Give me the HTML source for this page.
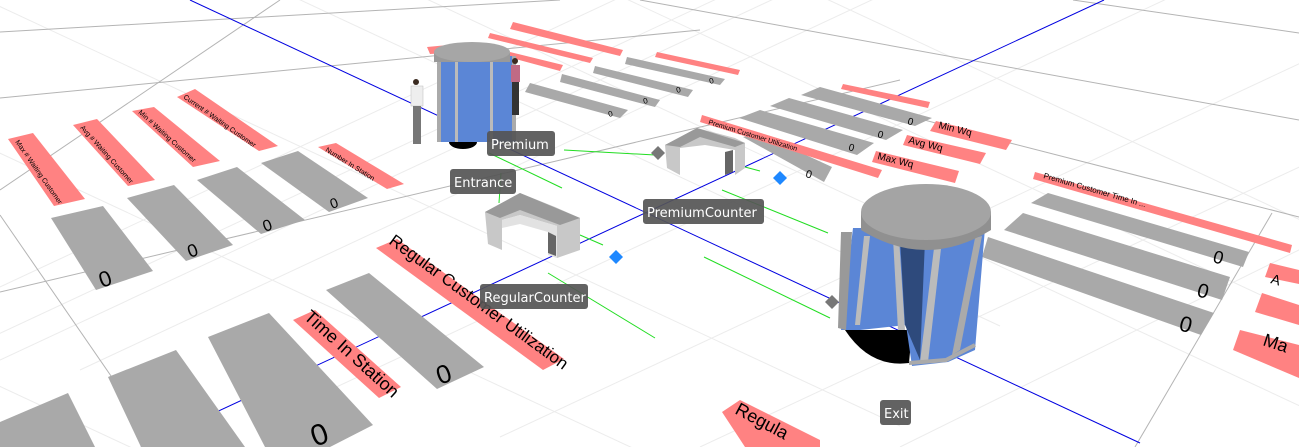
<!DOCTYPE html>
<html><head><meta charset="utf-8"><style>
html,body{margin:0;padding:0;background:#fff;overflow:hidden;width:1299px;height:447px}
svg{display:block;overflow:hidden}
.t{font-family:"Liberation Sans",sans-serif}
.lb{fill:#555;opacity:.92}
.lt{fill:#fff;font-family:"DejaVu Sans","Liberation Sans",sans-serif;font-size:13px}
</style></head><body>
<svg width="1299" height="447" viewBox="0 0 1299 447" xmlns="http://www.w3.org/2000/svg">
<rect width="1299" height="447" fill="#fff"/>
<g stroke="#ececec" stroke-width="1">
<line x1="-200" y1="60" x2="800" y2="526"/><line x1="-100" y1="-40" x2="900" y2="426"/>
<line x1="0" y1="-140" x2="1000" y2="326"/><line x1="300" y1="-60" x2="1300" y2="406"/>
<line x1="500" y1="-60" x2="1400" y2="360"/><line x1="700" y1="-60" x2="1500" y2="313"/>
<line x1="-400" y1="200" x2="600" y2="666"/><line x1="-500" y1="320" x2="500" y2="786"/>
<line x1="900" y1="-60" x2="0" y2="360"/><line x1="1000" y1="-60" x2="80" y2="370"/>
<line x1="1250" y1="-40" x2="300" y2="404"/><line x1="1350" y1="40" x2="500" y2="437"/>
<line x1="1400" y1="120" x2="700" y2="447"/><line x1="800" y1="-40" x2="-100" y2="380"/>
<line x1="700" y1="-40" x2="-150" y2="357"/><line x1="1400" y1="200" x2="900" y2="447"/>
</g>
<g stroke="#b4b4b4" stroke-width="1" fill="none">
<line x1="0" y1="32" x2="560" y2="0"/><line x1="0" y1="98" x2="700" y2="30"/>
<line x1="0" y1="292" x2="900" y2="80"/><line x1="0" y1="190" x2="280" y2="0"/>
<line x1="1010" y1="143" x2="1299" y2="217"/><line x1="1073" y1="0" x2="1299" y2="33"/>
<line x1="1272" y1="213" x2="1135" y2="447"/><line x1="850" y1="100" x2="1010" y2="143"/>
<line x1="0" y1="215" x2="160" y2="447"/><line x1="640" y1="0" x2="1299" y2="120"/>
</g>
<g stroke="#0000e0" stroke-width="1">
<line x1="190" y1="0" x2="1140" y2="443"/><line x1="1104" y1="0" x2="141" y2="447"/>
</g>
<g stroke="#22dd22" stroke-width="1">
<line x1="564" y1="150" x2="655" y2="155"/><line x1="489" y1="153" x2="562" y2="188"/>
<line x1="548" y1="273" x2="655" y2="338"/><line x1="580" y1="235" x2="603" y2="245"/>
<line x1="722" y1="190" x2="828" y2="233"/><line x1="704" y1="257" x2="830" y2="318"/>
<line x1="745" y1="167" x2="760" y2="171"/><line x1="501" y1="173" x2="499" y2="203"/>
</g>
<g fill="#a9a9a9">
<polygon points="51,218 103,206 153,271 96,290"/>
<polygon points="127,198 174,185 233,245 186,261"/>
<polygon points="197,180 237,167 305,220 261,234"/>
<polygon points="261,163 298,151 368,198 329,212"/>
<polygon points="0,422 68,393 95,447 0,447"/>
<polygon points="108,377 176,350 245,447 141,447"/>
<polygon points="208,337 269,313 373,425 330,447 265,447"/>
<polygon points="326,290 369,273 484,367 437,389"/>
<polygon points="530,83 628,110 620,118 525,92"/>
<polygon points="562,74 660,100 655,107 560,82"/>
<polygon points="595,66 693,90 688,97 593,73"/>
<polygon points="627,57 725,79 720,85 625,64"/>
<polygon points="801,95 820,87 932,118 915,126"/>
<polygon points="770,106 789,98 903,130 886,140"/>
<polygon points="739,118 760,110 874,143 857,155"/>
<polygon points="743,137 758,133 832,167 824,182"/>
<polygon points="1048,193 1249,252 1243,267 1031,203"/>
<polygon points="1023,213 1230,277 1222,300 1004,230"/>
<polygon points="988,237 1214,313 1201,335 982,257"/>
</g>
<g fill="#ff8282">
<polygon points="8,139 33,133 85,199 54,206"/>
<polygon points="73,125 97,119 155,180 128,186"/>
<polygon points="132,111 154,107 220,161 193,167"/>
<polygon points="177,97 195,89 278,146 259,151"/>
<polygon points="318,147 336,143 404,184 387,189"/>
<polygon points="293,320 315,310 401,387 379,398"/>
<polygon points="376,248 397,239 564,359 543,370"/>
<polygon points="513,22 623,50 620,56 510,29"/>
<polygon points="490,33 593,58 590,63 488,38"/>
<polygon points="510,52 563,65 560,71 508,57"/>
<polygon points="427,47 448,45 448,53 430,54"/>
<polygon points="657,52 740,70 738,75 655,57"/>
<polygon points="843,84 930,102 928,108 841,89"/>
<polygon points="702,115 882,170 878,178 700,122"/>
<polygon points="936,121 1012,140 1006,150 930,131"/>
<polygon points="907,135 986,153 980,164 903,145"/>
<polygon points="876,151 959,171 955,183 872,162"/>
<polygon points="1035,172 1292,245 1290,253 1033,179"/>
<polygon points="1270,263 1299,270 1299,284 1265,277"/>
<polygon points="1262,293 1299,305 1299,325 1255,312"/>
<polygon points="1240,330 1299,345 1299,378 1233,350"/>
<polygon points="722,412 740,400 820,440 820,447 745,447"/>
</g>
<g class="t" fill="#000">
<text transform="translate(303,318) rotate(42)" font-size="18">Time In Station</text>
<text transform="translate(388,243) rotate(36)" font-size="17">Regular Customer Utilization</text>
<text transform="translate(734,413) rotate(28)" font-size="18">Regula</text>
<text transform="translate(1043,178) rotate(16)" font-size="8">Premium Customer Time In ...</text>
<text transform="translate(938,128) rotate(14)" font-size="10">Min Wq</text>
<text transform="translate(908,143) rotate(14)" font-size="10">Avg Wq</text>
<text transform="translate(877,159) rotate(14)" font-size="10">Max Wq</text>
<text transform="translate(1270,283) rotate(16)" font-size="14">A</text>
<text transform="translate(1262,345) rotate(18)" font-size="18">Ma</text>
<text transform="translate(15,142) rotate(55)" font-size="7">Max # Waiting Customer</text>
<text transform="translate(80,128) rotate(48)" font-size="7">Avg # Waiting Customer</text>
<text transform="translate(138,113) rotate(42)" font-size="7">Min # Waiting Customer</text>
<text transform="translate(183,98) rotate(35)" font-size="7">Current # Waiting Customer</text>
<text transform="translate(325,151) rotate(32)" font-size="7">Number In Station</text>
<text transform="translate(708,124) rotate(17)" font-size="7">Premium Customer Utilization</text>
</g>
<g class="t" fill="#000">
<text transform="translate(102,288) rotate(-20)" font-size="22">0</text>
<text transform="translate(190,258) rotate(-20)" font-size="18">0</text>
<text transform="translate(265,232) rotate(-20)" font-size="16">0</text>
<text transform="translate(332,209) rotate(-20)" font-size="14">0</text>
<text transform="translate(440,385) rotate(-20)" font-size="26">0</text>
<text transform="translate(315,447) rotate(-20)" font-size="30">0</text>
<text transform="translate(1212,262) rotate(15)" font-size="18">0</text>
<text transform="translate(1196,296) rotate(15)" font-size="20">0</text>
<text transform="translate(1178,330) rotate(15)" font-size="22">0</text>
<text transform="translate(907,124) rotate(15)" font-size="10">0</text>
<text transform="translate(877,137) rotate(15)" font-size="10">0</text>
<text transform="translate(848,150) rotate(15)" font-size="10">0</text>
<text transform="translate(805,177) rotate(15)" font-size="11">0</text>
<text transform="translate(710,84) rotate(-15)" font-size="8">0</text>
<text transform="translate(677,93) rotate(-15)" font-size="8">0</text>
<text transform="translate(644,104) rotate(-15)" font-size="8">0</text>
<text transform="translate(609,117) rotate(-15)" font-size="8">0</text>
</g>
<g>
<ellipse cx="463" cy="142" rx="14" ry="7" fill="#000"/>
<rect x="437" y="56" width="79" height="86" fill="#5b86d6"/>
<rect x="437" y="56" width="4" height="86" fill="#aaa"/>
<rect x="455" y="58" width="3" height="84" fill="#bbb"/>
<rect x="490" y="58" width="3" height="84" fill="#bbb"/>
<rect x="512" y="56" width="4" height="84" fill="#aaa"/>
<rect x="434" y="53" width="76" height="9" fill="#999"/>
<ellipse cx="472" cy="52" rx="38" ry="10" fill="#a6a6a6"/>
</g>
<g>
<circle cx="416" cy="82" r="3" fill="#3a2a20"/>
<rect x="411" y="86" width="12" height="20" fill="#eee" stroke="#bbb" stroke-width=".5"/>
<rect x="413" y="106" width="8" height="38" fill="#777"/>
<circle cx="515" cy="61" r="3" fill="#3a2a20"/>
<rect x="511" y="65" width="9" height="17" fill="#c06a85"/>
<rect x="512" y="82" width="7" height="33" fill="#333"/>
</g>
<g>
<polygon points="485,212 520,193 555,207 580,218 580,250 557,258 557,226 520,215 502,220 502,250 488,244" fill="#c8c8c8"/>
<polygon points="502,220 520,215 557,226 557,258 548,255 548,232 520,224 502,228" fill="#e2e2e2"/>
<polygon points="485,212 520,193 580,218 560,225 520,210 500,218" fill="#999"/>
<polygon points="665,145 697,128 735,138 745,143 745,168 735,175 735,150 705,145 680,148 680,175 667,168" fill="#c8c8c8"/>
<polygon points="665,145 697,128 745,143 735,147 700,137 680,147" fill="#999"/>
<polygon points="725,152 733,150 733,172 725,175" fill="#666"/>
<polygon points="548,232 556,236 556,256 548,253" fill="#666"/>
</g>
<polygon points="616,250 623,257 616,264 609,257" fill="#1e88ff"/>
<polygon points="780,171 787,178 780,185 773,178" fill="#1e88ff"/>
<polygon points="658,146 665,153 658,160 651,153" fill="#777"/>
<polygon points="832,295 839,302 832,309 825,302" fill="#777"/>
<g>
<path d="M845,330 Q870,368 909,363 L912,330 Z" fill="#000"/>
<polygon points="853,228 985,228 975,350 948,362 912,366 906,325 860,330 841,330" fill="#5b86d6"/>
<polygon points="900,240 925,240 920,360 905,325" fill="#2e4a7c"/>
<polygon points="841,232 852,232 846,330 838,328" fill="#999"/>
<polygon points="864,236 870,236 860,325 855,325" fill="#bbb"/>
<polygon points="893,238 899,238 905,330 898,330" fill="#bbb"/>
<polygon points="935,240 942,240 928,362 920,362" fill="#bbb"/>
<polygon points="975,238 982,236 960,350 952,355" fill="#aaa"/>
<path d="M909,363 L946,360 975,345" stroke="#aaa" stroke-width="4" fill="none"/>
<path d="M861,212 L861,230 Q926,270 991,230 L991,212 Z" fill="#909090"/>
<ellipse cx="926" cy="212" rx="65" ry="28" fill="#a4a4a4"/>
</g>
<g>
<rect class="lb" x="487" y="131" width="68" height="25" rx="3"/><text class="lt" x="491" y="149">Premium</text>
<rect class="lb" x="450" y="169" width="66" height="25" rx="3"/><text class="lt" x="454" y="187">Entrance</text>
<rect class="lb" x="643" y="199" width="121" height="25" rx="3"/><text class="lt" x="647" y="217">PremiumCounter</text>
<rect class="lb" x="480" y="284" width="108" height="25" rx="3"/><text class="lt" x="484" y="302">RegularCounter</text>
<rect class="lb" x="880" y="400" width="31" height="25" rx="3"/><text class="lt" x="884" y="418">Exit</text>
</g>
</svg>
</body></html>
